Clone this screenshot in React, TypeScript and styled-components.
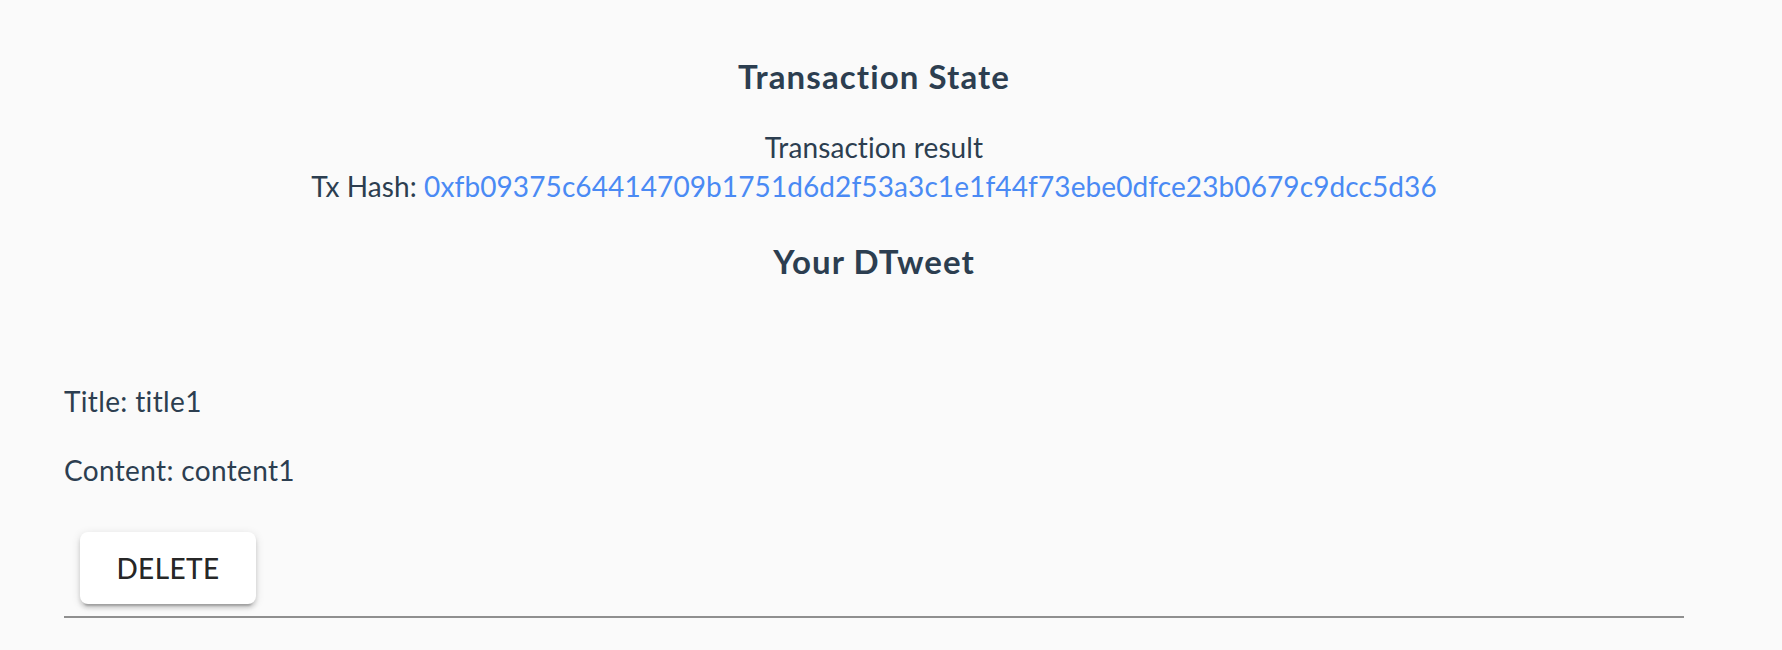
import React from "react";
import styled, { createGlobalStyle } from "styled-components";

const GlobalStyle = createGlobalStyle`
  html, body {
    margin: 0;
    padding: 0;
    background: #fafafa;
  }
  body {
    font-family: Lato, "Open Sans", "Liberation Sans", sans-serif;
    color: #2c3e50;
    -webkit-font-smoothing: antialiased;
  }
`;

const Page = styled.div`
  width: 1620px;
  margin-left: 64px;
  display: flex;
  flex-direction: column;
`;

const Heading = styled.h3<{ $top: number }>`
  margin: ${(p) => p.$top}px 0 0;
  font-size: 33px;
  line-height: 40px;
  font-weight: 700;
  letter-spacing: 1.1px;
  text-align: center;
`;

const CenterLine = styled.div<{ $top?: number }>`
  margin-top: ${(p) => p.$top ?? 0}px;
  font-size: 28px;
  line-height: 39px;
  letter-spacing: 0.1px;
  text-align: center;
`;

const HashLink = styled.a`
  color: #4a8af4;
  text-decoration: none;
`;

const Field = styled.p<{ $top: number }>`
  margin: ${(p) => p.$top}px 0 0;
  font-size: 28px;
  line-height: 39px;
  letter-spacing: 0.35px;
  text-align: left;
`;

const ButtonRow = styled.div`
  display: flex;
  margin-top: 42px;
  padding-left: 16px;
`;

const DeleteButton = styled.button`
  width: 176px;
  height: 72px;
  border: none;
  border-radius: 8px;
  background: #ffffff;
  color: rgba(0, 0, 0, 0.87);
  font-family: inherit;
  font-size: 28px;
  font-weight: 500;
  letter-spacing: 0.4px;
  text-transform: uppercase;
  cursor: pointer;
  box-shadow: 0 6px 2px -4px rgba(0, 0, 0, 0.2),
    0 4px 4px 0 rgba(0, 0, 0, 0.14), 0 2px 10px 0 rgba(0, 0, 0, 0.12);
`;

const Divider = styled.hr`
  margin: 12px 0 0;
  border: none;
  height: 2px;
  background: #8f8f8f;
`;

export default function App() {
  return (
    <>
      <GlobalStyle />
      <Page>
        <Heading $top={56}>Transaction State</Heading>
        <CenterLine $top={32}>Transaction result</CenterLine>
        <CenterLine>
          Tx Hash:{" "}
          <HashLink href="#">
            0xfb09375c64414709b1751d6d2f53a3c1e1f44f73ebe0dfce23b0679c9dcc5d36
          </HashLink>
        </CenterLine>
        <Heading $top={35}>Your DTweet</Heading>
        <Field $top={101}>Title: title1</Field>
        <Field $top={30}>Content: content1</Field>
        <ButtonRow>
          <DeleteButton>Delete</DeleteButton>
        </ButtonRow>
        <Divider />
      </Page>
    </>
  );
}
